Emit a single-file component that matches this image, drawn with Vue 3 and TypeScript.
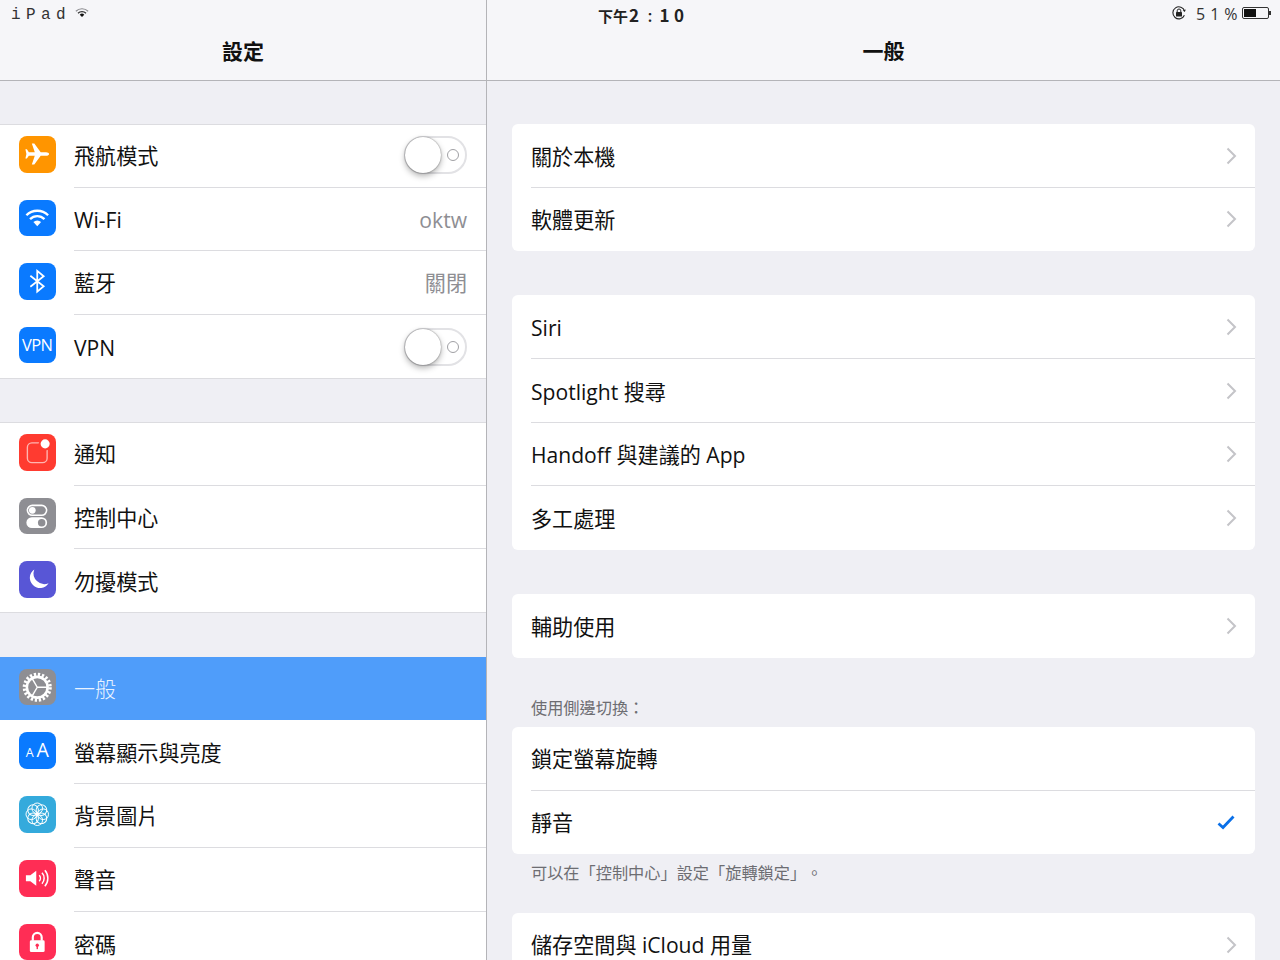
<script setup lang="ts">
interface Row { label: string; icon: string; bg: string; value?: string; toggle?: boolean; active?: boolean }
const leftGroups: Row[][] = [
  [
    { label: '飛航模式', icon: 'plane', bg: '#ff9500', toggle: true },
    { label: 'Wi-Fi', icon: 'wifi', bg: '#0a7aff', value: 'oktw' },
    { label: '藍牙', icon: 'bt', bg: '#0a7aff', value: '關閉' },
    { label: 'VPN', icon: 'vpn', bg: '#0a7aff', toggle: true },
  ],
  [
    { label: '通知', icon: 'notif', bg: '#ff3b30' },
    { label: '控制中心', icon: 'cc', bg: '#8e8e93' },
    { label: '勿擾模式', icon: 'moon', bg: '#5856d6' },
  ],
  [
    { label: '一般', icon: 'gear', bg: '#8e8e93', active: true },
    { label: '螢幕顯示與亮度', icon: 'aa', bg: '#0a7aff' },
    { label: '背景圖片', icon: 'flower', bg: '#34aadc' },
    { label: '聲音', icon: 'sound', bg: '#ff2d55' },
    { label: '密碼', icon: 'lock', bg: '#ff2d55' },
  ],
]
const petals = [0, 45, 90, 135, 180, 225, 270, 315]
</script>

<template>
  <div class="page">
    <div class="status">
      <div class="status-left">
        <span>iPad</span>
        <svg width="14" height="11" viewBox="0 0 16 12">
          <path d="M1 4.6a10 10 0 0 1 14 0" fill="none" stroke="#8a8a8e" stroke-width="1.3" />
          <path d="M3.4 6.9a6.6 6.6 0 0 1 9.2 0" fill="none" stroke="#333" stroke-width="1.4" />
          <path d="M5.4 8.6a3.6 3.6 0 0 1 5.2 0L8 11.2z" fill="#111" />
        </svg>
      </div>
      <div class="status-time">下午<span class="digits">2<span class="colon">：</span>10</span></div>
      <div class="status-right">
        <svg width="16" height="16" viewBox="0 0 16 16">
          <path d="M13.4 10.2A6 6 0 1 1 13.6 6" fill="none" stroke="#222" stroke-width="1.1" />
          <path d="M14.8 4.6l-1 2.4-2-1.4z" fill="#222" />
          <rect x="5" y="7" width="6" height="4.6" rx=".6" fill="#222" />
          <path d="M6.2 7V5.8a1.8 1.8 0 0 1 3.6 0V7" fill="none" stroke="#222" stroke-width="1" />
        </svg>
        <span class="pct">51%</span>
        <div class="battery"><div class="battery-fill"></div></div>
        <div class="battery-tip"></div>
      </div>
    </div>

    <aside class="left">
      <header class="nav"><h1>設定</h1></header>
      <div class="left-body">
        <section v-for="(group, gi) in leftGroups" :key="gi" class="left-group">
          <div v-for="row in group" :key="row.label" class="left-row" :class="{ active: row.active }">
            <div class="icon" :style="{ background: row.bg }">
              <svg v-if="row.icon === 'plane'" viewBox="0 0 37 37">
                <path fill="#fff" d="M30.5 18.2c0-1-1.500-1.800-3-1.800H22L15.500 7.500H13l3 8.900h-6L8 13.500H6.500l1 4.700-1 4.700H8l2-2.900h6L13 29h2.500L22 20h5.500c1.500 0 3-.8 3-1.800z" />
              </svg>
              <svg v-else-if="row.icon === 'wifi'" viewBox="0 0 37 37" fill="none" stroke="#fff" stroke-width="2.4">
                <path d="M7.5 15.5a15.5 15.5 0 0 1 22 0" />
                <path d="M11.2 19.4a10.3 10.3 0 0 1 14.6 0" />
                <path d="M14.6 22.4a5.5 5.5 0 0 1 7.8 0L18.5 26.6z" fill="#fff" stroke="none" />
              </svg>
              <svg v-else-if="row.icon === 'bt'" viewBox="0 0 37 37" fill="none" stroke="#fff" stroke-width="1.8">
                <path d="M11.500 13l13.500 10.500-6.500 5.500V8l6.500 5.500-13.500 10.500" />
              </svg>
              <span v-else-if="row.icon === 'vpn'" class="icon-vpn">VPN</span>
              <svg v-else-if="row.icon === 'notif'" viewBox="0 0 37 37">
                <rect x="8.500" y="9" width="20" height="20" rx="4.500" fill="none" stroke="#ffb5b0" stroke-width="1.400" />
                <circle cx="26.500" cy="10" r="6.600" fill="#ff3b30" />
                <circle cx="26.500" cy="10" r="4.600" fill="#fff" />
              </svg>
              <svg v-else-if="row.icon === 'cc'" viewBox="0 0 37 37">
                <rect x="8.500" y="7.500" width="19.500" height="10" rx="5" fill="none" stroke="#fff" stroke-width="1.600" />
                <circle cx="13.500" cy="12.500" r="3.400" fill="#fff" />
                <rect x="7.500" y="19.500" width="21" height="11" rx="5.500" fill="#fff" />
                <circle cx="23" cy="25" r="3.800" fill="#8e8e93" />
              </svg>
              <svg v-else-if="row.icon === 'moon'" viewBox="0 0 37 37">
                <path fill="#fff" d="M15.500 8.500A10.300 10.300 0 1 0 30 22.500 11 11 0 0 1 15.500 8.500z" />
              </svg>
              <svg v-else-if="row.icon === 'gear'" viewBox="0 0 37 37" fill="none" stroke="#fff">
                <circle cx="18.500" cy="18.500" r="13" stroke-width="3.500" stroke-dasharray="2.300 1.800" />
                <circle cx="18.500" cy="18.500" r="10.500" stroke-width="2.600" />
                <path d="M18.500 18.500H29M18.500 18.500l-5.250-9.100M18.500 18.500l-5.250 9.100" stroke-width="1.500" />
              </svg>
              <span v-else-if="row.icon === 'aa'" class="icon-aa"><small>A</small>A</span>
              <svg v-else-if="row.icon === 'flower'" viewBox="0 0 37 37" fill="none" stroke="#fff" stroke-width="1">
                <circle v-for="a in petals" :key="a" cx="18.500" cy="12.500" r="5.400" :transform="`rotate(${a} 18.500 18.500)`" />
              </svg>
              <svg v-else-if="row.icon === 'sound'" viewBox="0 0 37 37" fill="none" stroke="#fff" stroke-width="1.500">
                <path d="M7 15.500h4.500l6-4.500v15l-6-4.500H7z" fill="#fff" stroke="none" />
                <path d="M20.500 15.500a4.400 4.400 0 0 1 0 6" />
                <path d="M23.300 13a8 8 0 0 1 0 11" />
                <path d="M26.200 10.500a12 12 0 0 1 0 16" />
              </svg>
              <svg v-else-if="row.icon === 'lock'" viewBox="0 0 37 37">
                <path d="M14 17v-3.500a4.500 4.500 0 0 1 9 0V17" fill="none" stroke="#fff" stroke-width="2.200" />
                <rect x="11" y="16.500" width="15" height="12" rx="1.500" fill="#fff" />
                <circle cx="18.500" cy="21.500" r="1.700" fill="#ff2d55" />
                <rect x="17.800" y="22" width="1.400" height="3.500" fill="#ff2d55" />
              </svg>
            </div>
            <div class="left-main">
              <span class="label">{{ row.label }}</span>
              <span v-if="row.value" class="value">{{ row.value }}</span>
              <div v-if="row.toggle" class="toggle"><div class="knob"></div><div class="ring"></div></div>
            </div>
          </div>
        </section>
      </div>
    </aside>

    <main class="right">
      <header class="nav"><h1>一般</h1></header>
      <div class="right-body">
        <section class="card">
          <div class="card-row"><span class="label">關於本機</span><svg class="chev" width="11" height="18" viewBox="0 0 11 18"><path d="M1.500 1.500L9 9l-7.500 7.500" /></svg></div>
          <div class="card-row"><span class="label">軟體更新</span><svg class="chev" width="11" height="18" viewBox="0 0 11 18"><path d="M1.500 1.500L9 9l-7.500 7.500" /></svg></div>
        </section>
        <section class="card">
          <div class="card-row"><span class="label">Siri</span><svg class="chev" width="11" height="18" viewBox="0 0 11 18"><path d="M1.500 1.500L9 9l-7.500 7.500" /></svg></div>
          <div class="card-row"><span class="label">Spotlight 搜尋</span><svg class="chev" width="11" height="18" viewBox="0 0 11 18"><path d="M1.500 1.500L9 9l-7.500 7.500" /></svg></div>
          <div class="card-row"><span class="label">Handoff 與建議的 App</span><svg class="chev" width="11" height="18" viewBox="0 0 11 18"><path d="M1.500 1.500L9 9l-7.500 7.500" /></svg></div>
          <div class="card-row"><span class="label">多工處理</span><svg class="chev" width="11" height="18" viewBox="0 0 11 18"><path d="M1.500 1.500L9 9l-7.500 7.500" /></svg></div>
        </section>
        <section class="card">
          <div class="card-row"><span class="label">輔助使用</span><svg class="chev" width="11" height="18" viewBox="0 0 11 18"><path d="M1.500 1.500L9 9l-7.500 7.500" /></svg></div>
        </section>
        <p class="sec-head">使用側邊切換：</p>
        <section class="card tight">
          <div class="card-row"><span class="label">鎖定螢幕旋轉</span></div>
          <div class="card-row"><span class="label">靜音</span><svg class="check" width="18" height="15" viewBox="0 0 18 15"><path d="M1.500 8.500l4.500 4L16.500 1.500" /></svg></div>
        </section>
        <p class="sec-foot">可以在「控制中心」設定「旋轉鎖定」。</p>
        <section class="card">
          <div class="card-row"><span class="label">儲存空間與 iCloud 用量</span><svg class="chev" width="11" height="18" viewBox="0 0 11 18"><path d="M1.500 1.500L9 9l-7.500 7.500" /></svg></div>
        </section>
      </div>
    </main>
  </div>
</template>

<style>
html, body { margin: 0; background: #efeff4; }
</style>

<style scoped>
.page {
  position: relative;
  display: grid;
  grid-template-columns: 487px 793px;
  width: 1280px;
  height: 960px;
  overflow: hidden;
  background: #efeff4;
  font-family: "Open Sans", "Noto Sans CJK TC", sans-serif;
  color: #111;
  text-spacing-trim: space-all;
}
.status {
  position: absolute;
  top: 0;
  left: 0;
  width: 1280px;
  height: 28px;
  z-index: 2;
}
.status-left {
  position: absolute;
  left: 11px;
  top: 7px;
  display: flex;
  gap: 4px;
  align-items: flex-start;
  font: 16px/16px "Liberation Mono", monospace;
  letter-spacing: 5.4px;
  color: #333;
}
.status-time {
  position: absolute;
  left: 598px;
  top: 4px;
  font: 700 15px/21px "Noto Sans CJK TC", sans-serif;
  color: #222;
}
.digits { font-size: 17px; letter-spacing: 4.5px; margin-left: 1px; }
.colon { font-size: 13px; letter-spacing: 0; margin: 0 3px 0 0; }
.status-right {
  position: absolute;
  left: 1171px;
  top: 5px;
  display: flex;
  align-items: flex-start;
}
.pct {
  margin-left: 9px;
  font: 16px/19px "Open Sans", sans-serif;
  letter-spacing: 5px;
  color: #333;
}
.battery {
  margin: 2px 0 0 -1px;
  box-sizing: border-box;
  width: 27px;
  height: 12px;
  border: 1px solid #333;
  border-radius: 2px;
  padding: 1px;
}
.battery-fill { width: 12px; height: 8px; background: #111; }
.battery-tip { width: 2px; height: 4px; margin: 6px 0 0 0; background: #333; }

.nav {
  box-sizing: border-box;
  height: 81px;
  background: #f6f6f9;
  border-bottom: 1px solid #b4b4b8;
  text-align: center;
}
.nav h1 {
  margin: 0;
  padding-top: 35px;
  font: 700 21px/30px "Noto Sans CJK TC", sans-serif;
  color: #111;
}
.left { border-right: 1px solid #b4b4b8; min-width: 0; }
.left-body { padding-top: 43px; }
.left-group {
  background: #fff;
  box-shadow: inset 0 1px #dcdce0, inset 0 -1px #dcdce0;
  margin-bottom: 43.5px;
}
.left-row { display: flex; box-sizing: border-box; height: 63.67px; padding-left: 19px; }
.left-group:last-child .left-row { height: 63.85px; }
.icon {
  flex: none;
  display: flex;
  align-items: center;
  justify-content: center;
  width: 36.5px;
  height: 36.5px;
  margin: 12px 18.5px 0 0;
  border-radius: 8px;
  overflow: hidden;
  color: #fff;
}
.icon svg { width: 100%; height: 100%; display: block; }
.icon-vpn { font: 16.5px/37px "Open Sans", sans-serif; margin-top: -1px; letter-spacing: -0.6px; }
.icon-aa { font: 400 19.5px/37px "Open Sans", sans-serif; }
.icon-aa small { font-size: 12.5px; margin-right: 3px; }
.left-main {
  flex: 1;
  display: flex;
  align-items: center;
  justify-content: space-between;
  padding-right: 19px;
  border-bottom: 1px solid #dcdce0;
  min-width: 0;
}
.left-row:last-child .left-main { border-bottom: none; }
.label { font-size: 21.1px; line-height: 30px; font-weight: 400; padding-top: 1.5px; }
.value { font-size: 21.1px; line-height: 30px; color: #8e8e93; padding-top: 1.5px; }
.left-row.active { background: #4f9dfa; }
.left-row.active .left-main { border-bottom-color: transparent; }
.left-row.active .label { color: #e9f3ff; font-weight: 300; }
.toggle {
  position: relative;
  box-sizing: border-box;
  width: 63px;
  height: 38px;
  border: 2px solid #e2e2e5;
  border-radius: 19px;
  background: #fff;
}
.knob {
  position: absolute;
  left: -1px;
  top: -1px;
  width: 36px;
  height: 36px;
  border-radius: 50%;
  background: #fff;
  box-shadow: 0 3px 6px rgba(0, 0, 0, .3), 0 0 1.5px rgba(0, 0, 0, .55);
}
.ring {
  position: absolute;
  right: 6.5px;
  top: 11px;
  box-sizing: border-box;
  width: 12px;
  height: 12px;
  border: 1.6px solid #a0a0a4;
  border-radius: 50%;
}

.right-body { padding: 43px 25px 0; }
.card {
  background: #fff;
  border-radius: 6px;
  margin-bottom: 44px;
  overflow: hidden;
}
.card.tight { margin-bottom: 0; }
.card-row {
  position: relative;
  box-sizing: border-box;
  display: flex;
  align-items: center;
  justify-content: space-between;
  height: 63.67px;
  padding: 0 18px 0 19px;
}
.card-row + .card-row::before {
  content: "";
  position: absolute;
  left: 19px;
  right: 0;
  top: -1px;
  height: 1px;
  background: #dcdce0;
}
.chev { fill: none; stroke: #c4c4c8; stroke-width: 2; }
.check { fill: none; stroke: #0a70e8; stroke-width: 2.8; margin-right: 2px; }
.sec-head, .sec-foot {
  margin: 0;
  padding-left: 19px;
  font-size: 16.2px;
  line-height: 22px;
  color: #6d6d72;
}
.sec-head { margin-top: -5px; padding-bottom: 8.3px; }
.sec-foot { padding-top: 8px; padding-bottom: 28.7px; }
</style>
